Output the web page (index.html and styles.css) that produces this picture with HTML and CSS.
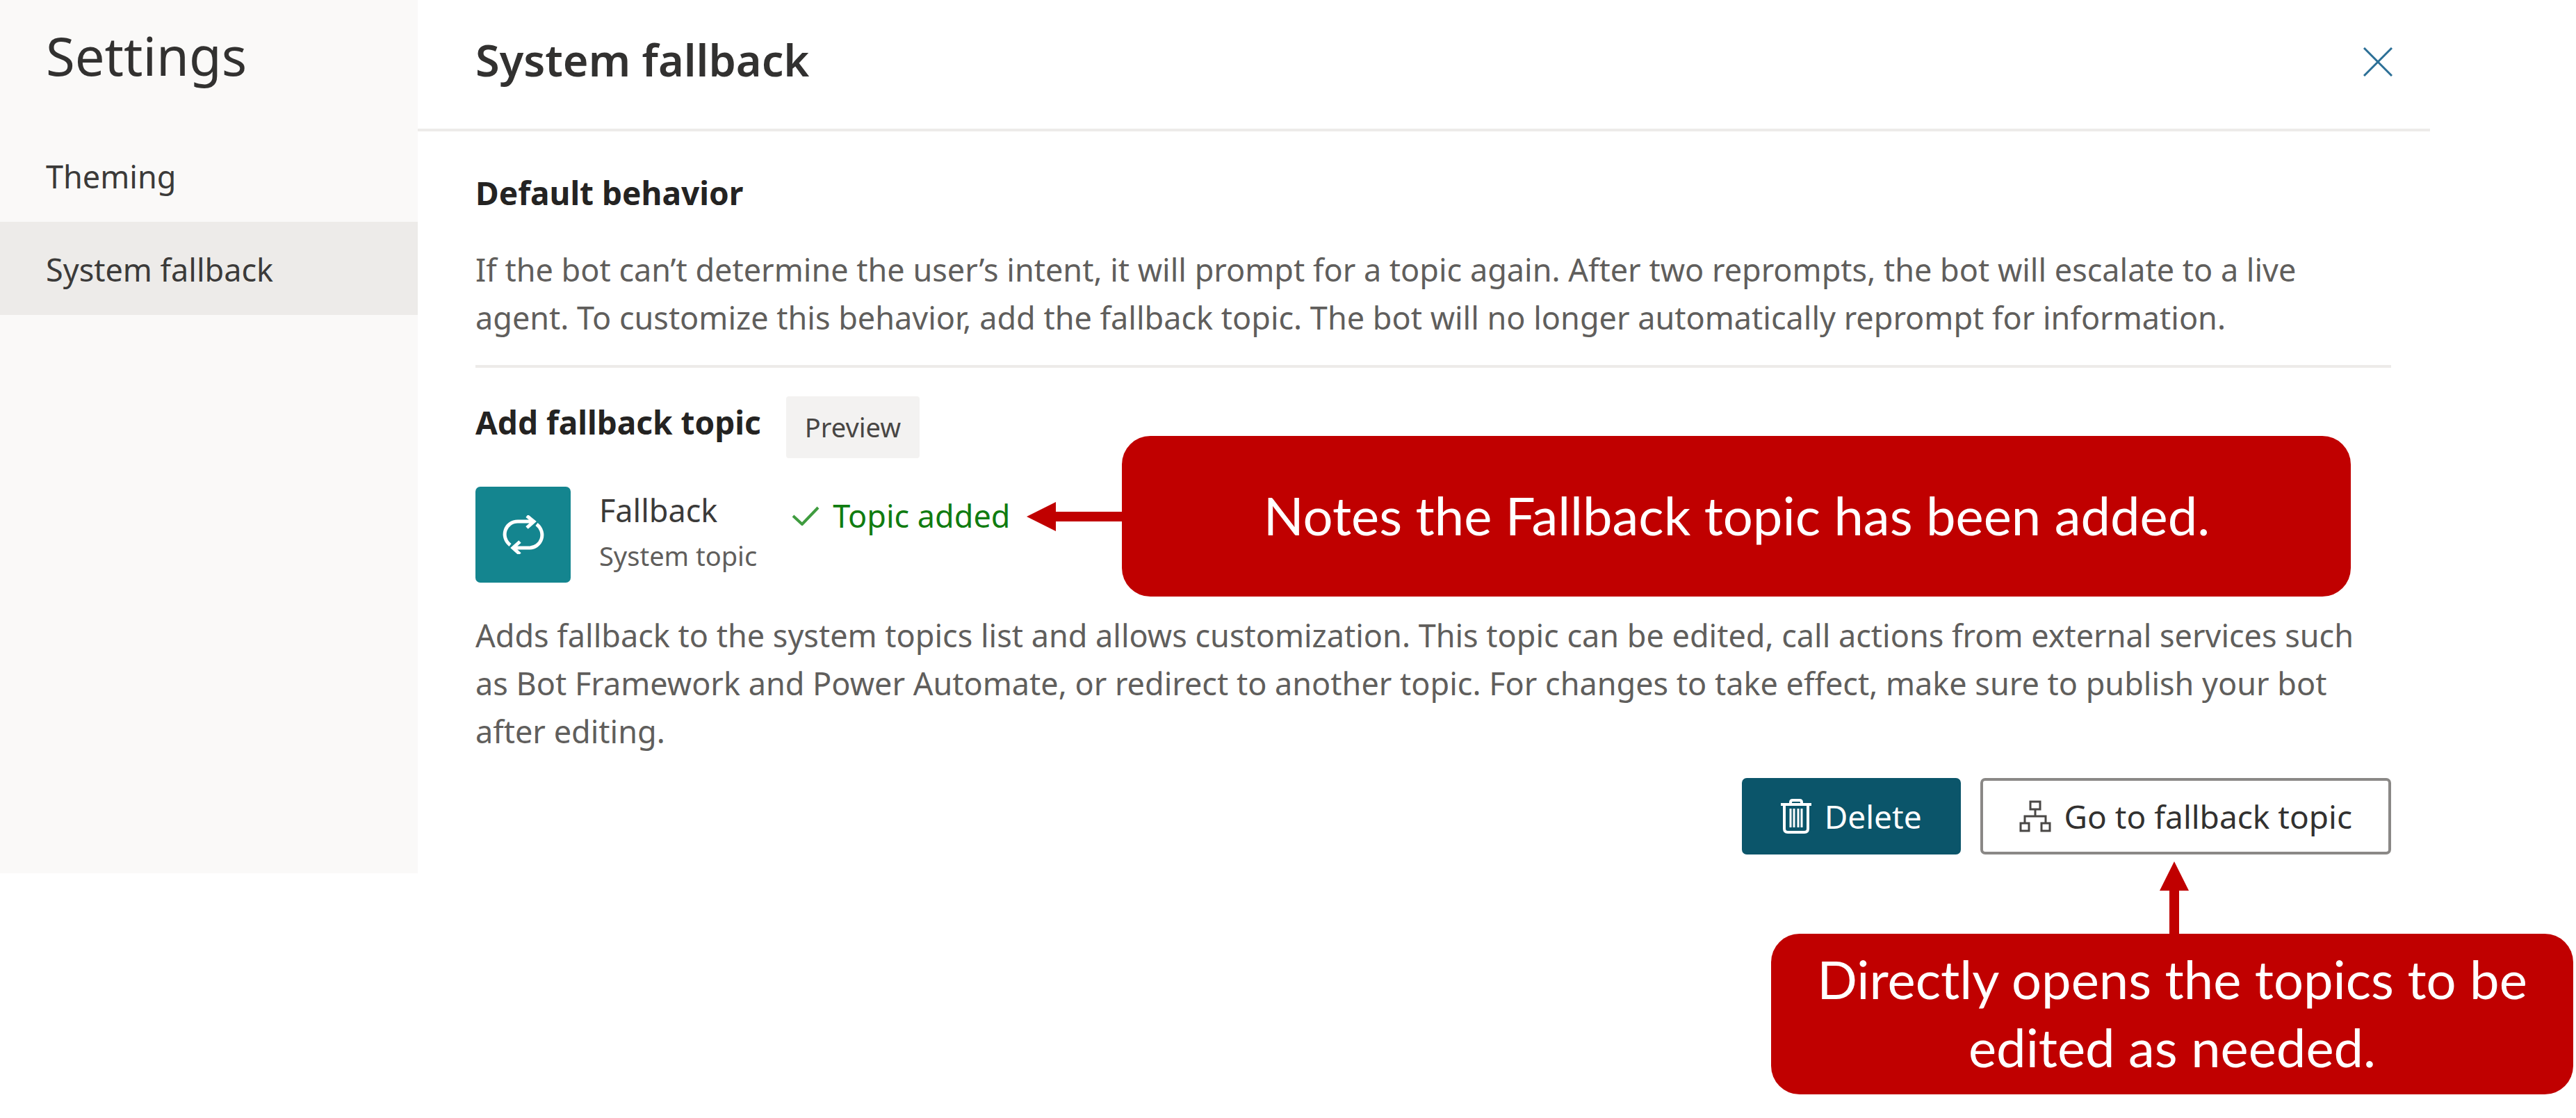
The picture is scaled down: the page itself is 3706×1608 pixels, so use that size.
FILE: index.html
```html
<!DOCTYPE html>
<html lang="en">
<head>
  <meta charset="utf-8">
  <meta name="viewport" content="width=device-width, initial-scale=1">
  <title>Settings - System fallback</title>
  <link rel="stylesheet" href="styles.css">
</head>
<body>
  <div class="settings">
    <nav class="sidebar" aria-label="Settings">
      <h1 class="sidebar-title">Settings</h1>
      <a class="nav-item" href="#theming">Theming</a>
      <a class="nav-item nav-item-active" href="#fallback" aria-current="page">System fallback</a>
    </nav>

    <main class="panel" id="fallback">
      <header class="panel-header">
        <h2 class="panel-title">System fallback</h2>
        <button class="close" type="button" aria-label="Close">
          <svg width="42" height="42" viewBox="0 0 42 42" fill="none" stroke="#2b6f96" stroke-width="3"><path d="M1 1 41 41M41 1 1 41"/></svg>
        </button>
      </header>

      <div class="panel-body">
        <section class="behavior">
          <h3 class="section-title">Default behavior</h3>
          <p class="text">If the bot can’t determine the user’s intent, it will prompt for a topic again. After two reprompts, the bot will escalate to a live agent. To customize this behavior, add the fallback topic. The bot will no longer automatically reprompt for information.</p>
        </section>

        <section class="fallback">
          <div class="fallback-heading">
            <h3 class="section-title">Add fallback topic</h3>
            <span class="badge">Preview</span>
          </div>

          <div class="topic">
            <div class="topic-icon">
              <svg width="60" height="56" viewBox="0 0 60 56" fill="none" stroke="#fff" stroke-width="5"><path d="M11 43C-4 31 4 9 22 9H44M35 1 45 9 35 18M49 13C64 25 56 47 38 47H16M25 38 15 47 25 56"/></svg>
            </div>
            <div class="topic-text">
              <div class="topic-name">Fallback</div>
              <div class="topic-kind">System topic</div>
            </div>
            <div class="status">
              <svg width="40" height="28" viewBox="0 0 40 28" fill="none" stroke="#3f9c3f" stroke-width="4"><path d="M2 14 15 26 38 2"/></svg>
              <span>Topic added</span>
              <div class="note note-added">
                <svg width="137" height="42" viewBox="0 0 137 42" fill="#c00000"><path d="M0 21 42 0V14H137V28H42V42z"/></svg>
                <div class="note-box note-box-wide">Notes the Fallback topic has been added.</div>
              </div>
            </div>
          </div>

          <p class="text">Adds fallback to the system topics list and allows customization. This topic can be edited, call actions from external services such as Bot Framework and Power Automate, or redirect to another topic. For changes to take effect, make sure to publish your bot after editing.</p>

          <div class="actions">
            <button class="button button-primary" type="button">
              <svg width="44" height="50" viewBox="0 0 44 50" fill="none" stroke="#fff" stroke-width="4"><path d="M0 8H44M14 8V5Q14 2 17 2H27Q30 2 30 5V8M5 8V43Q5 48 10 48H34Q39 48 39 43V8"/><path stroke-width="3" d="M14 14V41M19 14V41M25 14V41M30 14V41"/></svg>
              <span>Delete</span>
            </button>
            <div class="action-with-note">
              <button class="button button-outline" type="button">
                <svg width="46" height="46" viewBox="0 0 46 46" fill="none" stroke="#4a4846" stroke-width="3"><path d="M16 2H30V13H16zM23 13V23M8 33V23H38V33M2 33H14V44H2zM32 33H44V44H32z"/></svg>
                <span>Go to fallback topic</span>
              </button>
              <div class="note note-open">
                <svg width="48" height="104" viewBox="0 0 48 104" fill="#c00000"><path d="M27 0 48 42H34V104H20V42H6z"/></svg>
                <div class="note-box">Directly opens the topics to be edited as needed.</div>
              </div>
            </div>
          </div>
        </section>
      </div>
    </main>
  </div>
</body>
</html>
```
FILE: styles.css
```css
* {
  box-sizing: border-box;
}

body {
  min-height: 100vh;
  margin: 0;
  padding-bottom: 340px;
  background: #fff;
  color: #323130;
  font-family: "Noto Sans", "Segoe UI", sans-serif;
  font-size: 45px;
  line-height: 69px;
}

h1,
h2,
h3,
p {
  margin: 0;
}

svg {
  display: block;
  flex: none;
}

.settings {
  display: flex;
  padding-right: 210px;
}

/* Sidebar */
.sidebar {
  flex: none;
  width: 601px;
  padding-top: 24px;
  background: #faf9f8;
}

.sidebar-title {
  margin-bottom: 49px;
  padding-left: 66px;
  font-size: 76px;
  font-weight: 400;
  line-height: 112px;
}

.nav-item {
  display: block;
  padding: 34px 66px 31px;
  color: #3b3a39;
  text-decoration: none;
}

.nav-item-active {
  background: #edebe9;
}

/* Panel */
.panel {
  flex: 1;
  min-width: 0;
}

.panel-header {
  display: flex;
  align-items: flex-start;
  justify-content: space-between;
  padding: 44px 54px 51px 83px;
  border-bottom: 4px solid #edebe9;
}

.panel-title {
  font-size: 63px;
  font-weight: 600;
  line-height: 84px;
}

.close {
  display: flex;
  align-items: center;
  height: 90px;
  padding: 0;
  border: 0;
  background: none;
}

.panel-body {
  padding: 54px 56px 27px 83px;
}

.section-title {
  font-size: 46px;
  font-weight: 700;
  color: #242322;
}

.text {
  padding-right: 16px;
  color: #605e5c;
}

.behavior {
  display: flex;
  flex-direction: column;
  gap: 41px;
  padding-bottom: 34px;
  border-bottom: 4px solid #edebe9;
}

.fallback {
  display: flex;
  flex-direction: column;
  gap: 41px;
  padding-top: 41px;
}

.fallback-heading {
  display: flex;
  gap: 36px;
}

.fallback-heading .section-title {
  padding-top: 3px;
}

.badge {
  padding: 10px 27px;
  border-radius: 4px;
  background: #f3f2f1;
  color: #484644;
  font-size: 38px;
}

.topic {
  display: flex;
}

.topic-icon {
  display: flex;
  align-items: center;
  justify-content: center;
  width: 137px;
  height: 138px;
  margin-right: 41px;
  border-radius: 7px;
  background: #14858f;
}

.topic-name {
  color: #3b3a39;
  line-height: 68px;
}

.topic-kind {
  color: #605e5c;
  font-size: 38px;
  line-height: 62px;
}

.status {
  position: relative;
  display: flex;
  align-items: center;
  align-self: flex-start;
  gap: 19px;
  margin: 7px 0 0 50px;
  color: #107c10;
}

/* Buttons */
.actions {
  display: flex;
  justify-content: flex-end;
  gap: 28px;
  margin-top: -8px;
}

.button {
  display: flex;
  align-items: center;
  gap: 19px;
  height: 110px;
  padding: 0 52px;
  border: 4px solid #8a8886;
  border-radius: 7px;
  background: #fff;
  color: #323130;
  font: inherit;
  font-size: 46px;
}

.button-primary {
  border-color: #0b556a;
  background: #0b556a;
  color: #fff;
}

.action-with-note {
  position: relative;
}

/* Callouts laid over the panel */
.note {
  position: absolute;
  display: flex;
  align-items: center;
}

.note-added {
  top: -80px;
  left: calc(100% + 24px);
}

.note-open {
  top: calc(100% + 10px);
  right: -262px;
  flex-direction: column;
}

.note-box {
  display: flex;
  align-items: center;
  justify-content: center;
  width: 1154px;
  min-height: 231px;
  padding: 0 40px 4px;
  border-radius: 41px;
  background: #c00000;
  color: #fff;
  font-family: Lato, Carlito, Calibri, sans-serif;
  font-size: 76px;
  line-height: 98px;
  text-align: center;
}

.note-box-wide {
  width: 1768px;
}
```
